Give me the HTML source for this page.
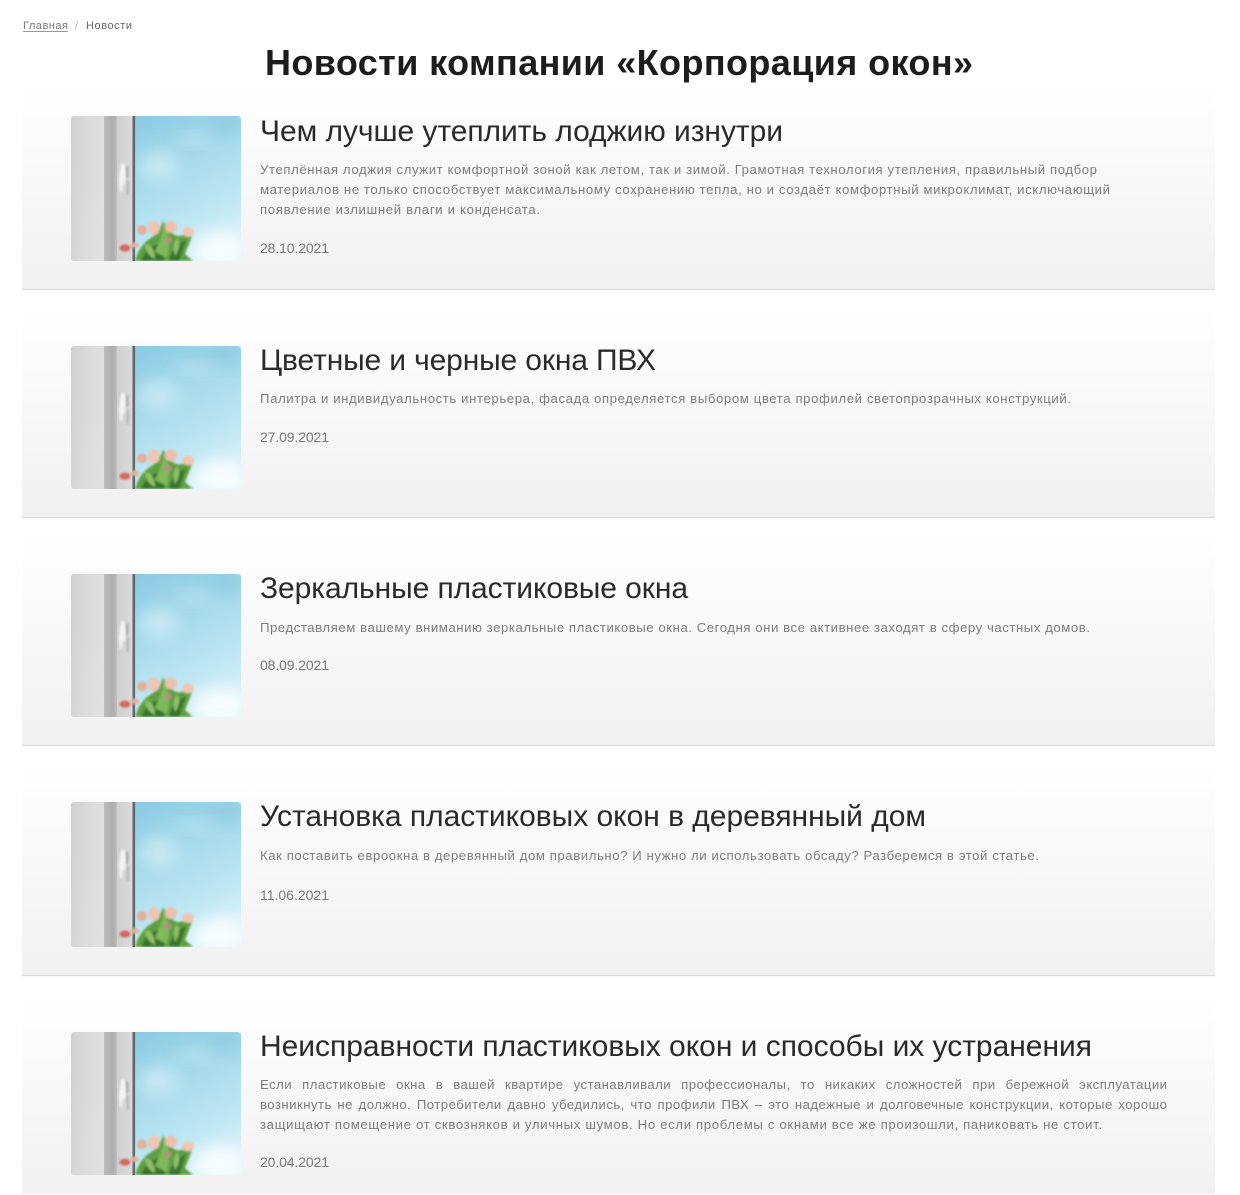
<!DOCTYPE html>
<html lang="ru">
<head>
<meta charset="utf-8">
<title>Новости компании «Корпорация окон»</title>
<style>
html,body{margin:0;padding:0;background:#fff;width:1240px;height:1195px;overflow:hidden}
svg{display:block}
text{font-family:"Liberation Sans","DejaVu Sans",sans-serif}
.h{font-size:30px;fill:#2b2b2b}
.d{font-size:13.2px;fill:#7d7d7d}
.t{font-size:14px;fill:#7a7a7a}
.soft{filter:url(#tb)}
</style>
</head>
<body>
<svg width="1240" height="1195" viewBox="0 0 1240 1195" xmlns="http://www.w3.org/2000/svg">
<defs>
<linearGradient id="card" x1="0" y1="0" x2="0" y2="1">
<stop offset="0" stop-color="#ffffff"/><stop offset="1" stop-color="#f1f1f1"/>
</linearGradient>
<linearGradient id="sky" x1="0.1" y1="0" x2="0.5" y2="1">
<stop offset="0" stop-color="#8ccbe3"/><stop offset="0.4" stop-color="#a6daec"/><stop offset="0.75" stop-color="#bce6f2"/><stop offset="1" stop-color="#d8f1f7"/>
</linearGradient>
<linearGradient id="wall" x1="0" y1="0" x2="1" y2="0.25">
<stop offset="0" stop-color="#d0d0d0"/><stop offset="0.5" stop-color="#dadada"/><stop offset="1" stop-color="#e0e0e0"/>
</linearGradient>
<linearGradient id="frame" x1="0" y1="0" x2="1" y2="0">
<stop offset="0" stop-color="#bcbcbc"/><stop offset="0.7" stop-color="#aeaeae"/><stop offset="1" stop-color="#c0c0c0"/>
</linearGradient>
<linearGradient id="sash" x1="0" y1="0" x2="1" y2="0">
<stop offset="0" stop-color="#d0d0d0"/><stop offset="1" stop-color="#dadada"/>
</linearGradient>
<filter id="b1" x="-10%" y="-10%" width="120%" height="120%"><feGaussianBlur stdDeviation="1"/></filter>
<filter id="b6" x="-60%" y="-60%" width="220%" height="220%"><feGaussianBlur stdDeviation="8"/></filter>
<filter id="tb" x="-2%" y="-20%" width="104%" height="140%"><feGaussianBlur stdDeviation="0.35"/></filter>
<clipPath id="rc"><rect width="170" height="145" rx="3"/></clipPath>
<symbol id="win" viewBox="0 0 170 145" preserveAspectRatio="none">
<g clip-path="url(#rc)">
<rect x="62" width="108" height="145" fill="url(#sky)"/>
<ellipse cx="88" cy="50" rx="20" ry="16" fill="#d4eef6" opacity=".7" filter="url(#b6)"/>
<ellipse cx="125" cy="24" rx="24" ry="5" fill="#bde4f1" opacity=".9" filter="url(#b6)"/>
<rect x="140" y="0" width="30" height="20" fill="#7fc0da" opacity=".45" filter="url(#b6)"/>
<ellipse cx="150" cy="134" rx="28" ry="18" fill="#ffffff" opacity=".8" filter="url(#b6)"/>
<rect x="0" width="33" height="145" fill="url(#wall)"/>
<rect x="33" width="13" height="145" fill="url(#frame)"/>
<rect x="46" width="16" height="145" fill="url(#sash)"/>
<rect x="61.5" width="2.6" height="145" fill="#62676a"/>
<g filter="url(#b1)">
<path d="M50 48h4l1 10-1 10h-2l-1 8h-2l-1-12z" fill="#f4f4f4"/>
<rect x="55" y="50" width="2" height="12" fill="#9a9a9a"/>
<rect x="55.5" y="64" width="2.5" height="15" fill="#b5b5b5"/>
<path d="M64 145C67 134 73 126 80 122C86 118 90 112 92 105C96 112 100 118 106 120C112 120 118 118 122 116C120 124 116 132 114 138L122 145Z" fill="#5f9f42"/>
<path d="M70 145C74 134 82 128 90 128L94 145ZM98 145C100 134 106 128 115 124L108 145Z" fill="#37752a"/>
<path d="M84 136C88 126 93 118 92 107C98 116 100 128 96 142Z" fill="#7fb95c"/>
<path d="M74 128C80 128 84 134 84 143C78 140 75 136 74 128ZM106 122C110 128 108 134 104 140C102 132 102 128 106 122Z" fill="#8fc06c"/>
<ellipse cx="71" cy="114" rx="5" ry="5" fill="#e0b09c"/>
<ellipse cx="83" cy="112" rx="6" ry="7" fill="#edc6b6"/>
<ellipse cx="100" cy="111" rx="6" ry="6" fill="#ecc0ae"/>
<ellipse cx="117" cy="116" rx="6" ry="5" fill="#eec6b4"/>
<ellipse cx="97" cy="124" rx="3.5" ry="3" fill="#b98d82"/>
<ellipse cx="54" cy="132" rx="5.5" ry="3.5" fill="#d0685e"/>
<ellipse cx="64" cy="129" rx="4" ry="3" fill="#e2b29c"/>
</g>
</g>
</symbol>
</defs>

<rect width="1240" height="1195" fill="#fff"/>

<rect x="22" y="83" width="1193" height="207" fill="url(#card)"/>
<rect x="22" y="289" width="1193" height="1.2" fill="#dcdcdc"/>
<rect x="22" y="305" width="1193" height="213" fill="url(#card)"/>
<rect x="22" y="517" width="1193" height="1.2" fill="#dcdcdc"/>
<rect x="22" y="533" width="1193" height="213" fill="url(#card)"/>
<rect x="22" y="745" width="1193" height="1.2" fill="#dcdcdc"/>
<rect x="22" y="762" width="1193" height="214" fill="url(#card)"/>
<rect x="22" y="975" width="1193" height="1.2" fill="#dcdcdc"/>
<rect x="22" y="997" width="1193" height="197" fill="url(#card)"/>

<use href="#win" x="71" y="116" width="170" height="145"/>
<use href="#win" x="71" y="346" width="170" height="143"/>
<use href="#win" x="71" y="574" width="170" height="143"/>
<use href="#win" x="71" y="802" width="170" height="145"/>
<use href="#win" x="71" y="1032" width="170" height="143"/>

<g class="soft">
<text x="23" y="29" font-size="11" fill="#777" textLength="45">Главная</text>
<rect x="23" y="31" width="45" height="1" fill="#999"/>
<text x="75" y="29" font-size="11" fill="#aaa">/</text>
<text x="86" y="29" font-size="11" fill="#666" textLength="46">Новости</text>

<text x="265" y="75" font-size="36" font-weight="700" fill="#1c1c1c" textLength="708">Новости компании «Корпорация окон»</text>

<text class="h" x="260" y="141" textLength="523">Чем лучше утеплить лоджию изнутри</text>
<text class="d" x="260" y="174" textLength="837">Утеплённая лоджия служит комфортной зоной как летом, так и зимой. Грамотная технология утепления, правильный подбор</text>
<text class="d" x="260" y="194" textLength="850">материалов не только способствует максимальному сохранению тепла, но и создаёт комфортный микроклимат, исключающий</text>
<text class="d" x="260" y="214" textLength="280">появление излишней влаги и конденсата.</text>
<text class="t" x="260" y="253" textLength="69">28.10.2021</text>

<text class="h" x="260" y="370" textLength="396">Цветные и черные окна ПВХ</text>
<text class="d" x="260" y="403" textLength="811">Палитра и индивидуальность интерьера, фасада определяется выбором цвета профилей светопрозрачных конструкций.</text>
<text class="t" x="260" y="442" textLength="69">27.09.2021</text>

<text class="h" x="260" y="598" textLength="428">Зеркальные пластиковые окна</text>
<text class="d" x="260" y="632" textLength="830">Представляем вашему вниманию зеркальные пластиковые окна. Сегодня они все активнее заходят в сферу частных домов.</text>
<text class="t" x="260" y="670" textLength="69">08.09.2021</text>

<text class="h" x="260" y="826" textLength="666">Установка пластиковых окон в деревянный дом</text>
<text class="d" x="260" y="860" textLength="779">Как поставить евроокна в деревянный дом правильно? И нужно ли использовать обсаду? Разберемся в этой статье.</text>
<text class="t" x="260" y="900" textLength="69">11.06.2021</text>

<text class="h" x="260" y="1056" textLength="832">Неисправности пластиковых окон и способы их устранения</text>
<text class="d" x="260" y="1089" word-spacing="6" textLength="907">Если пластиковые окна в вашей квартире устанавливали профессионалы, то никаких сложностей при бережной эксплуатации</text>
<text class="d" x="260" y="1109" word-spacing="1.5" textLength="907">возникнуть не должно. Потребители давно убедились, что профили ПВХ – это надежные и долговечные конструкции, которые хорошо</text>
<text class="d" x="260" y="1129" textLength="842">защищают помещение от сквозняков и уличных шумов. Но если проблемы с окнами все же произошли, паниковать не стоит.</text>
<text class="t" x="260" y="1167" textLength="69">20.04.2021</text>
</g>
</svg>
</body>
</html>
